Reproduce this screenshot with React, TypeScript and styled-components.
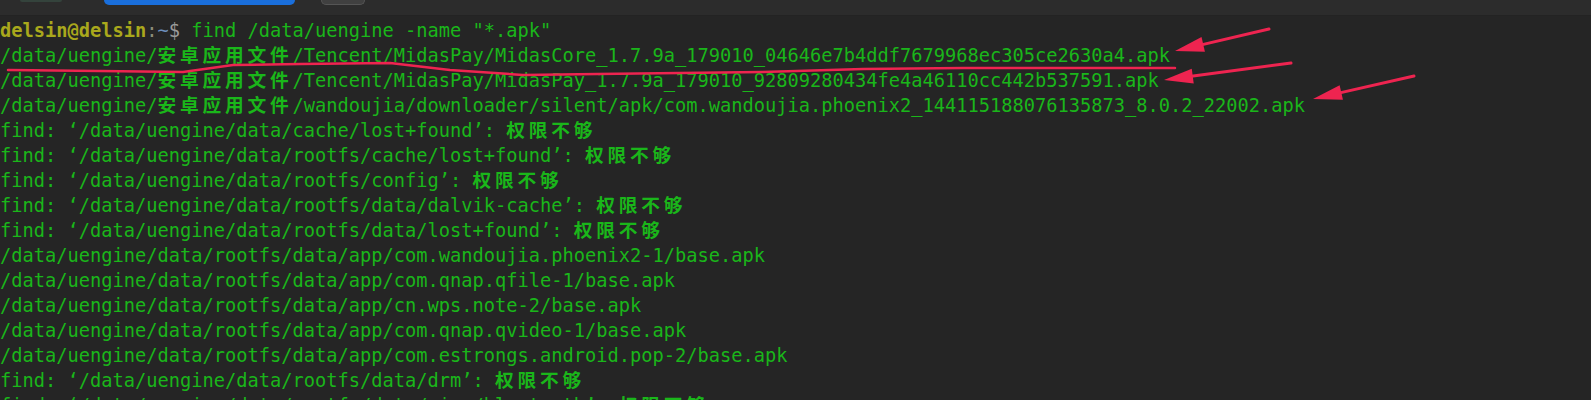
import React from "react";
import styled, { createGlobalStyle } from "styled-components";

const GlobalStyle = createGlobalStyle`
  html, body {
    margin: 0;
    padding: 0;
    background: #252525;
    overflow: hidden;
  }
`;

const Window = styled.div`
  position: relative;
  width: 1591px;
  height: 400px;
  background: #252525;
  overflow: hidden;
`;

const TabBar = styled.div`
  display: flex;
  align-items: flex-start;
  height: 15px;
  background: #2c2c2c;
  border-bottom: 1px solid #232323;
`;

const BarGhost = styled.div`
  margin-left: 20px;
  width: 42px;
  height: 2px;
  border-radius: 0 0 3px 3px;
  background: #34433c;
`;

const ActiveTab = styled.div`
  margin-left: 42px;
  width: 191px;
  height: 5px;
  border-radius: 0 0 6px 6px;
  background: #1a6fdc;
`;

const GhostButton = styled.div`
  margin-left: 26px;
  width: 42px;
  height: 4px;
  border-radius: 0 0 6px 6px;
  background: #404040;
  border: 1px solid #555;
  border-top: none;
`;

const Screen = styled.div`
  padding-top: 2px;
  font-family: "DejaVu Sans Mono", "Noto Sans CJK SC", monospace;
  font-size: 18.7px;
  line-height: 25px;
  color: #1ab61a;
  white-space: pre;
`;

const Line = styled.div`
  height: 25px;
`;

const Wide = styled.span`
  font-weight: 700;
  letter-spacing: calc(2ch - 1em);
`;

const Part = styled.span<{ $tone: string; $bold?: boolean }>`
  color: ${({ $tone }) => $tone};
  font-weight: ${({ $bold }) => ($bold ? 700 : 400)};
`;

const Overlay = styled.svg`
  position: absolute;
  left: 0;
  top: 0;
  pointer-events: none;
`;

const cjk = "安卓应用文件";

const lines = [
  `/data/uengine/${cjk}/Tencent/MidasPay/MidasCore_1.7.9a_179010_04646e7b4ddf7679968ec305ce2630a4.apk`,
  `/data/uengine/${cjk}/Tencent/MidasPay/MidasPay_1.7.9a_179010_92809280434fe4a46110cc442b537591.apk`,
  `/data/uengine/${cjk}/wandoujia/downloader/silent/apk/com.wandoujia.phoenix2_144115188076135873_8.0.2_22002.apk`,
  "find: ‘/data/uengine/data/cache/lost+found’: 权限不够",
  "find: ‘/data/uengine/data/rootfs/cache/lost+found’: 权限不够",
  "find: ‘/data/uengine/data/rootfs/config’: 权限不够",
  "find: ‘/data/uengine/data/rootfs/data/dalvik-cache’: 权限不够",
  "find: ‘/data/uengine/data/rootfs/data/lost+found’: 权限不够",
  "/data/uengine/data/rootfs/data/app/com.wandoujia.phoenix2-1/base.apk",
  "/data/uengine/data/rootfs/data/app/com.qnap.qfile-1/base.apk",
  "/data/uengine/data/rootfs/data/app/cn.wps.note-2/base.apk",
  "/data/uengine/data/rootfs/data/app/com.qnap.qvideo-1/base.apk",
  "/data/uengine/data/rootfs/data/app/com.estrongs.android.pop-2/base.apk",
  "find: ‘/data/uengine/data/rootfs/data/drm’: 权限不够",
  "find: ‘/data/uengine/data/rootfs/data/misc/bluetooth’: 权限不够",
];

const renderText = (text: string) =>
  text.split(/([\u4e00-\u9fff]+)/).map((chunk, i) =>
    /[\u4e00-\u9fff]/.test(chunk) ? <Wide key={i}>{chunk}</Wide> : chunk,
  );

// tail -> tip, head drawn as a solid triangle
const arrows = [
  { x1: 1269, y1: 29, x2: 1175, y2: 51 },
  { x1: 1291, y1: 63, x2: 1164, y2: 80 },
  { x1: 1414, y1: 76, x2: 1313, y2: 99 },
];

const headPoints = (a: (typeof arrows)[number]) => {
  const dx = a.x2 - a.x1;
  const dy = a.y2 - a.y1;
  const len = Math.hypot(dx, dy);
  const ux = dx / len;
  const uy = dy / len;
  const bx = a.x2 - ux * 29;
  const by = a.y2 - uy * 29;
  const w = 7.5;
  return `${a.x2},${a.y2} ${bx + uy * w},${by - ux * w} ${bx - uy * w},${by + ux * w}`;
};

const RED = "#ee2450";

export default function App() {
  return (
    <>
      <GlobalStyle />
      <Window>
        <TabBar>
          <BarGhost />
          <ActiveTab />
          <GhostButton />
        </TabBar>
        <Screen>
          <Line>
            <Part $tone="#a9a81c" $bold>
              delsin@delsin
            </Part>
            <Part $tone="#8c8c78">:</Part>
            <Part $tone="#6d8fbd">~</Part>
            <Part $tone="#9a9a9a">$</Part>
            {' find /data/uengine -name "*.apk"'}
          </Line>
          {lines.map((l, i) => (
            <Line key={i}>{renderText(l)}</Line>
          ))}
        </Screen>
        <Overlay width="1591" height="400" viewBox="0 0 1591 400">
          <polyline
            points="8,70 100,71 183,72 233,65 300,64 390,63 450,70 523,75 597,74 680,73 763,72 863,69 963,68 1060,68 1175,68"
            fill="none"
            stroke={RED}
            strokeWidth="2.5"
            strokeLinecap="round"
            strokeLinejoin="round"
          />
          {arrows.map((a, i) => (
            <g key={i}>
              <line
                x1={a.x1}
                y1={a.y1}
                x2={(a.x1 + a.x2) / 2 + (a.x2 - a.x1) * 0.3}
                y2={(a.y1 + a.y2) / 2 + (a.y2 - a.y1) * 0.3}
                stroke={RED}
                strokeWidth="3"
                strokeLinecap="round"
              />
              <polygon points={headPoints(a)} fill={RED} />
            </g>
          ))}
        </Overlay>
      </Window>
    </>
  );
}
